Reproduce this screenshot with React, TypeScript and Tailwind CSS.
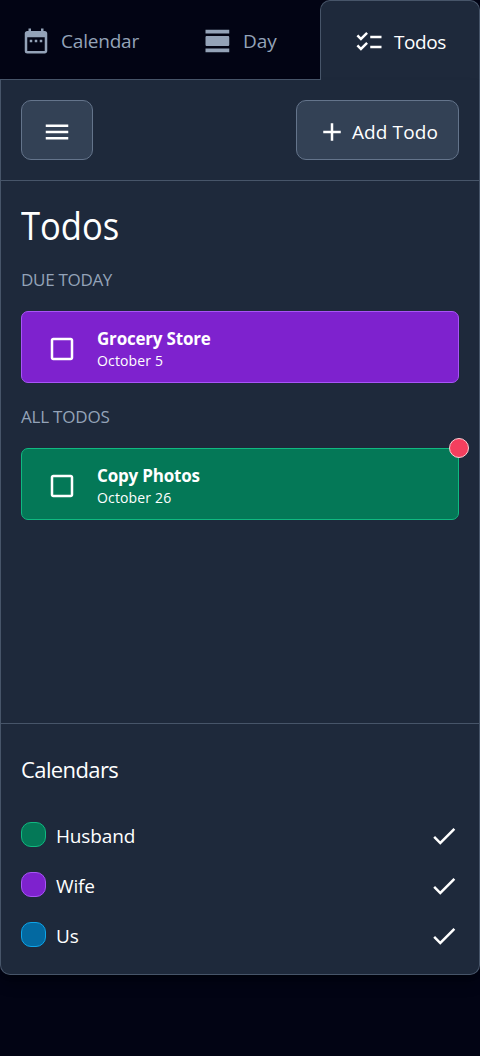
import type { ReactNode } from "react";
import { MdAdd, MdCheck, MdCheckBoxOutlineBlank, MdChecklist, MdDateRange, MdMenu, MdViewDay } from "react-icons/md";

function TodoCard({ title, date, colour, children }: { title: string; date: string; colour: string; children?: ReactNode }) {
  return (
    <div className={`relative flex h-[72px] items-center rounded-[7px] border pl-[25px] text-white ${colour}`}>
      <MdCheckBoxOutlineBlank size={30} className="mt-1 shrink-0" />
      <div className="ml-5 pt-1 whitespace-nowrap">
        <div className="text-[17px] leading-[24px] font-bold tracking-[-0.2px]">{title}</div>
        <div className="text-[14px] leading-5 tracking-[0.15px]">{date}</div>
      </div>
      {children}
    </div>
  );
}

function CalendarRow({ name, colour }: { name: string; colour: string }) {
  return (
    <li className="flex h-[50px] items-center">
      <span className={`mb-[3px] size-[25px] rounded-[10px] border ${colour}`} />
      <span className="ml-2.5 text-[19px] leading-7 tracking-[-0.15px]">{name}</span>
      <MdCheck size={30} className="ml-auto" />
    </li>
  );
}

export default function App() {
  return (
    <div className="flex h-[1056px] w-[480px] flex-col overflow-hidden bg-[#020414] font-['Open_Sans','Noto_Sans',sans-serif] text-white">
      <nav className="grid h-20 shrink-0 grid-cols-[1fr_1fr_160px] text-[19px] leading-7">
        <a className="flex items-center border-b border-[#475569] pt-[3px] pl-[21px] text-[#94a3b8]">
          <MdDateRange size={30} />
          <span className="ml-2.5 tracking-[-0.2px]">Calendar</span>
        </a>
        <a className="flex items-center border-b border-[#475569] pt-[3px] pl-[43px] text-[#94a3b8]">
          <MdViewDay size={30} />
          <span className="ml-2.5">Day</span>
        </a>
        <a className="flex items-center rounded-t-[10px] border border-b-0 border-[#475569] bg-[#1e293b] pt-[3px] pl-[33px]">
          <MdChecklist size={30} />
          <span className="ml-2.5 tracking-[-0.4px]">Todos</span>
        </a>
      </nav>
      <main className="flex h-[895px] shrink-0 flex-col rounded-b-[10px] border border-t-0 border-[#475569] bg-[#1e293b] shadow-lg shadow-black/30">
        <div className="flex h-[101px] items-center justify-between border-b border-[#475569] px-5">
          <button className="flex h-[60px] w-[72px] items-center justify-center rounded-[10px] border border-[#64748b] bg-[#334155] pt-1">
            <MdMenu size={30} />
          </button>
          <button className="flex h-[60px] w-[163px] items-center rounded-[10px] border border-[#64748b] bg-[#334155] pt-1 pl-5">
            <MdAdd size={30} />
            <span className="ml-[5px] text-[19px] leading-7 tracking-[0.1px] whitespace-nowrap">Add Todo</span>
          </button>
        </div>
        <section className="h-[542px] px-5 pt-[19px]">
          <h1 className="origin-left scale-x-[0.91] text-[38px] leading-[50px]">Todos</h1>
          <h2 className="mt-[18px] text-[17px] leading-6 tracking-[-0.3px] text-[#94a3b8]">DUE TODAY</h2>
          <div className="mt-[19px]">
            <TodoCard title="Grocery Store" date="October 5" colour="border-[#a855f7] bg-[#7e22ce]" />
          </div>
          <h2 className="mt-[22px] text-[17px] leading-6 tracking-[-0.2px] text-[#94a3b8]">ALL TODOS</h2>
          <div className="mt-[19px]">
            <TodoCard title="Copy Photos" date="October 26" colour="border-[#10b981] bg-[#047857]">
              <span className="absolute -top-[11px] -right-[11px] size-5 rounded-full border border-[#fecdd3] bg-[#f43f5e]" />
            </TodoCard>
          </div>
        </section>
        <section className="flex-1 border-t border-[#475569] px-5 pt-[29px]">
          <h2 className="text-[22px] leading-8 tracking-[-0.6px]">Calendars</h2>
          <ul className="mt-[26px]">
            <CalendarRow name="Husband" colour="border-[#10b981] bg-[#047857]" />
            <CalendarRow name="Wife" colour="border-[#a855f7] bg-[#7e22ce]" />
            <CalendarRow name="Us" colour="border-[#0ea5e9] bg-[#0369a1]" />
          </ul>
        </section>
      </main>
    </div>
  );
}
